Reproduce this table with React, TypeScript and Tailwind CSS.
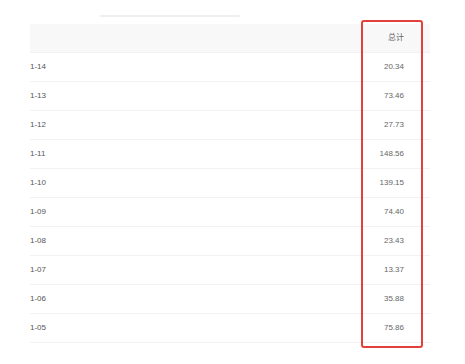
import React from "react";

const rows: [string, string][] = [
  ["1-14", "20.34"],
  ["1-13", "73.46"],
  ["1-12", "27.73"],
  ["1-11", "148.56"],
  ["1-10", "139.15"],
  ["1-09", "74.40"],
  ["1-08", "23.43"],
  ["1-07", "13.37"],
  ["1-06", "35.88"],
  ["1-05", "75.86"],
];

export default function App() {
  return (
    <div
      className="w-[465px] h-[364px] bg-white relative overflow-hidden"
      style={{ fontFamily: '"Liberation Sans", "Noto Sans CJK SC", sans-serif' }}
    >
      <div className="pt-[15px] pl-[100px]">
        <div className="w-[140px] h-[2px] bg-[#eeeeee] rounded-full blur-[0.6px]" />
      </div>
      <div className="ml-[30px] mt-[7px] w-[400px] text-[8px] text-[#666]">
        <div className="h-[29px] bg-[#f8f8f8] flex items-center justify-end pr-[26px] border-b border-[#f2f2f2]">
          总计
        </div>
        {rows.map(([d, v]) => (
          <div
            key={d}
            className="h-[29px] flex items-center justify-between pr-[26px] border-b border-[#f2f2f2]"
          >
            <span className="text-[#555]">{d}</span>
            <span>{v}</span>
          </div>
        ))}
      </div>
      <div className="absolute left-[361px] top-[20px] w-[62px] h-[328px] border-2 border-[#e2413b] rounded-[3px]" />
    </div>
  );
}
